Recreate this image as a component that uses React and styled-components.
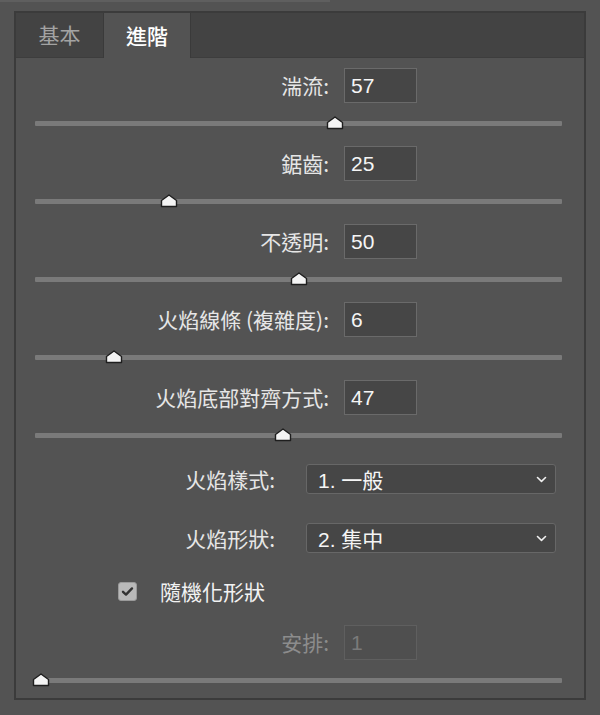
import React from 'react';
import styled, { createGlobalStyle } from 'styled-components';

const GlobalStyle = createGlobalStyle`
  html, body {
    margin: 0;
    padding: 0;
    background: #535353;
  }
  body {
    font-family: "Noto Sans CJK TC", "Noto Sans", sans-serif;
    color: #e8e8e8;
  }
`;

const sliders = [
  { label: '湍流:', value: '57', pct: 57 },
  { label: '鋸齒:', value: '25', pct: 25.5 },
  { label: '不透明:', value: '50', pct: 50 },
  { label: '火焰線條 (複雜度):', value: '6', pct: 15 },
  { label: '火焰底部對齊方式:', value: '47', pct: 47 },
];

const selects = [
  { label: '火焰樣式:', value: '1. 一般' },
  { label: '火焰形狀:', value: '2. 集中' },
];

const Thumb = () => (
  <svg width="18" height="14" viewBox="0 0 18 14">
    <path
      d="M1.5 12.5 V6.5 L9 1 L16.5 6.5 V12.5 Z"
      fill="#f4f4f4"
      stroke="#1e1e1e"
      strokeWidth="1.4"
      strokeLinejoin="round"
    />
  </svg>
);

const Slider = ({ pct }) => (
  <TrackWrap>
    <Track />
    <ThumbHolder style={{ left: `${pct}%` }}>
      <Thumb />
    </ThumbHolder>
  </TrackWrap>
);

const App = () => {
  return (
    <>
      <GlobalStyle />
      <TopEdge />
      <Panel>
        <TabBar>
          <Tab>基本</Tab>
          <Tab active>進階</Tab>
        </TabBar>
        <Content>
          {sliders.map((s) => (
            <SliderBlock key={s.label}>
              <Row>
                <Label width={313} gap={15}>{s.label}</Label>
                <NumberBox>{s.value}</NumberBox>
              </Row>
              <Slider pct={s.pct} />
            </SliderBlock>
          ))}
          <Selects>
            {selects.map((s) => (
              <Row key={s.label}>
                <Label width={259} gap={31}>{s.label}</Label>
                <Select>
                  <span>{s.value}</span>
                  <svg width="11" height="7" viewBox="0 0 11 7">
                    <path
                      d="M1.5 1.5 L5.5 5.3 L9.5 1.5"
                      fill="none"
                      stroke="#f0f0f0"
                      strokeWidth="1.6"
                      strokeLinecap="round"
                      strokeLinejoin="round"
                    />
                  </svg>
                </Select>
              </Row>
            ))}
          </Selects>
          <CheckRow>
            <CheckBox>
              <svg width="13" height="11" viewBox="0 0 13 11">
                <path
                  d="M2 5.8 L5 8.6 L11 2.4"
                  fill="none"
                  stroke="#333"
                  strokeWidth="2.4"
                  strokeLinecap="round"
                  strokeLinejoin="round"
                />
              </svg>
            </CheckBox>
            <CheckLabel>隨機化形狀</CheckLabel>
          </CheckRow>
          <SliderBlock last>
            <Row>
              <Label width={313} gap={15} disabled>安排:</Label>
              <NumberBox disabled>1</NumberBox>
            </Row>
            <Slider pct={1.1} />
          </SliderBlock>
        </Content>
      </Panel>
    </>
  );
};

const TopEdge = styled.div`
  width: 330px;
  height: 2px;
  background: #5f5f5f;
`;

const Panel = styled.div`
  margin: 9px 0 0 14px;
  width: 568px;
  border: 2px solid #3b3b3b;
  background: #535353;
`;

const TabBar = styled.div`
  display: flex;
  height: 44px;
  background: #434343;
  border-bottom: 1px solid #3d3d3d;
`;

const Tab = styled.div`
  width: ${(p) => (p.active ? '86px' : '87px')};
  display: flex;
  align-items: center;
  justify-content: center;
  font-size: 21px;
  color: ${(p) => (p.active ? '#ffffff' : '#a3a3a3')};
  font-weight: ${(p) => (p.active ? 500 : 400)};
  background: ${(p) => (p.active ? '#535353' : 'transparent')};
  border-left: ${(p) => (p.active ? '1px solid #3a3a3a' : 'none')};
  border-right: ${(p) => (p.active ? '1px solid #3a3a3a' : 'none')};
  margin-bottom: ${(p) => (p.active ? '-1px' : '0')};
  padding-bottom: 2px;
`;

const Content = styled.div`
  padding: 10px 0 9px 0;
`;

const SliderBlock = styled.div`
  margin-bottom: ${(p) => (p.last ? '0' : '14px')};
`;

const Row = styled.div`
  display: flex;
  align-items: center;
`;

const Label = styled.div`
  width: ${(p) => p.width}px;
  margin-right: ${(p) => p.gap}px;
  text-align: right;
  font-size: 21px;
  line-height: 1;
  color: ${(p) => (p.disabled ? '#8c8c8c' : '#e6e6e6')};
  white-space: nowrap;
`;

const NumberBox = styled.div`
  box-sizing: border-box;
  width: 73px;
  height: 35px;
  padding-left: 6px;
  display: flex;
  align-items: center;
  font-family: "Liberation Sans", "Noto Sans", sans-serif;
  font-size: 21px;
  color: ${(p) => (p.disabled ? '#7a7a7a' : '#f5f5f5')};
  background: ${(p) => (p.disabled ? '#4f4f4f' : '#464646')};
  border: 1px solid ${(p) => (p.disabled ? '#5f5f5f' : '#6a6a6a')};
`;

const TrackWrap = styled.div`
  position: relative;
  margin: 12px 22px 0 19px;
  height: 17px;
`;

const Track = styled.div`
  position: absolute;
  left: 0;
  right: 0;
  top: 6px;
  height: 5px;
  border-radius: 1px;
  background: #7a7a7a;
`;

const ThumbHolder = styled.div`
  position: absolute;
  top: 1px;
  width: 18px;
  height: 14px;
  transform: translateX(-9px);
  line-height: 0;
`;

const Selects = styled.div`
  display: flex;
  flex-direction: column;
  gap: 29px;
  margin-top: 20px;
`;

const Select = styled.div`
  box-sizing: border-box;
  width: 250px;
  height: 30px;
  padding: 0 8px 0 11px;
  display: flex;
  align-items: center;
  justify-content: space-between;
  background: #464646;
  border: 1px solid #676767;
  border-radius: 3px;
  font-size: 21px;
  color: #f5f5f5;
  span {
    font-family: "Liberation Sans", "Noto Sans CJK TC", sans-serif;
  }
`;

const CheckRow = styled.div`
  display: flex;
  align-items: center;
  margin: 29px 0 24px 102px;
  height: 19px;
`;

const CheckBox = styled.div`
  box-sizing: border-box;
  width: 19px;
  height: 19px;
  border-radius: 3px;
  background: #b9b9b9;
  border: 1px solid #9a9a9a;
  display: flex;
  align-items: center;
  justify-content: center;
`;

const CheckLabel = styled.div`
  margin-left: 23px;
  font-size: 21px;
  line-height: 1;
  color: #f2f2f2;
`;

export default App;
